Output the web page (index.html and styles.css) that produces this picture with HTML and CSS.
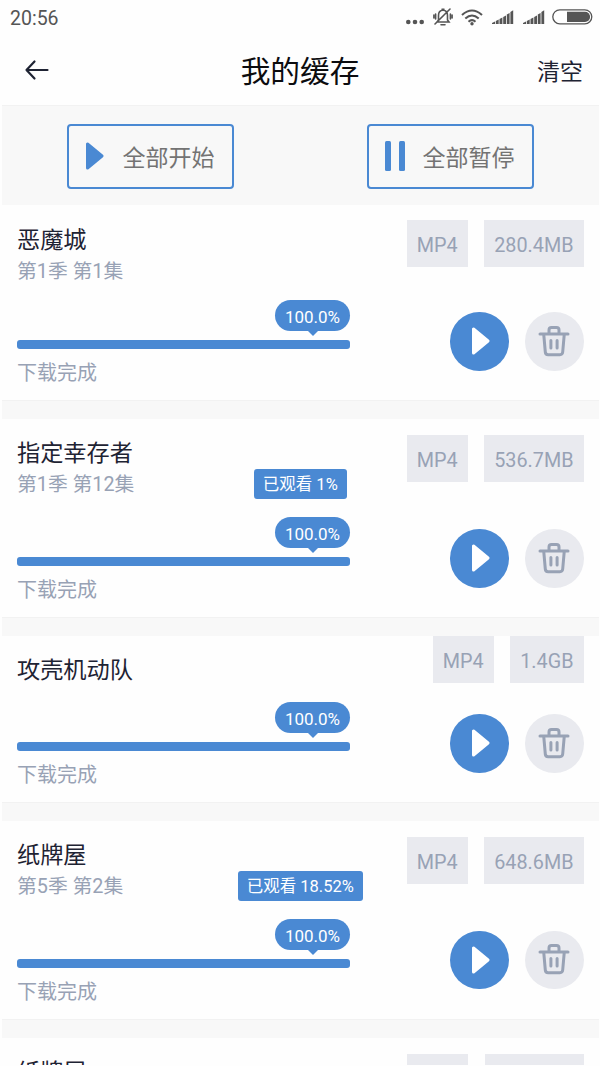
FILE: index.html
```html
<!DOCTYPE html>
<html lang="zh-CN">
<head>
<meta charset="utf-8">
<title>我的缓存</title>
<link rel="stylesheet" href="styles.css">
</head>
<body>
<svg class="defs" width="0" height="0">
  <symbol id="play" viewBox="0 0 20 28"><path d="M2.500 2v24L17 14z" fill="currentColor" stroke="currentColor" stroke-width="3" stroke-linejoin="round"/></symbol>
  <symbol id="trash" viewBox="0 0 32 32"><g fill="none" stroke="currentColor" stroke-width="3" stroke-linecap="round" stroke-linejoin="round"><path d="M2 9h28M11 8.500V5q0-2.500 2.500-2.500h5Q21 2.500 21 5v3.500M5.800 10l1.500 17q.2 2.700 2.800 2.700h11.800q2.600 0 2.800-2.700L26.200 10"/><path d="M12.900 15.500v7.500M19.100 15.500v7.500"/></g></symbol>
  <symbol id="signal" viewBox="0 0 22 16"><path fill="currentColor" d="M0 15v-1l3-1.500V15zM3.800 15v-3l2.900-1.400V15zM7.500 15v-5l2.900-1.400V15zM11.200 15V8l2.800-1.500V15zM14.800 15V5.500l2.800-1.500V15zM18.400 15V3l2.800-1.800V15z"/></symbol>
</svg>
<header class="header">
  <div class="status">
    <span class="clock">20:56</span>
    <div class="indicators">
      <svg class="dots" width="18" height="18" viewBox="0 0 18 18"><g fill="currentColor"><circle cx="2.300" cy="14" r="2.300"/><circle cx="9" cy="14" r="2.300"/><circle cx="15.700" cy="14" r="2.300"/></g></svg>
      <svg class="bell" width="20" height="18" viewBox="0 0 20 18"><g fill="none" stroke="currentColor" stroke-width="1.600" stroke-linecap="round"><path d="M4 14h12l-1.500-2V7.500Q14.500 2.200 10 2.200T5.500 7.500V12zM9 1.200h2M8 16.700h4M17 1L2 16M2.600 6v5M.9 7v3M17.400 6v5M19.100 7v3"/></g></svg>
      <svg class="wifi" width="22" height="18" viewBox="0 0 22 18"><g fill="none" stroke="currentColor" stroke-width="2.100"><path d="M1 7q10-9 20 0M4.300 10.500q6.700-6 13.400 0M7.500 13.700q3.500-3 7 0"/></g><circle cx="11" cy="15.800" r="1.700" fill="currentColor"/></svg>
      <svg class="signal" width="22" height="16"><use href="#signal"/></svg>
      <svg class="signal" width="22" height="16"><use href="#signal"/></svg>
      <svg class="battery" width="41" height="16" viewBox="0 0 41 16"><rect x=".8" y=".8" width="39" height="14" rx="7" fill="none" stroke="currentColor" stroke-width="1.300"/><path d="M15 2.700h18a5.100 5.100 0 0 1 0 10.200H15z" fill="currentColor"/></svg>
    </div>
  </div>
  <nav class="nav">
    <svg class="back" width="26" height="22" viewBox="0 0 26 22"><path d="M23.500 11H2.500M10.500 2.500L2.500 11l8 8.500" fill="none" stroke="currentColor" stroke-width="2.200" stroke-linecap="round" stroke-linejoin="round"/></svg>
    <h1 class="heading">我的缓存</h1>
    <span class="clear">清空</span>
  </nav>
</header>
<main>
  <div class="toolbar">
    <div class="bulk"><svg class="bulk-icon" width="20" height="28"><use href="#play"/></svg><span class="bulk-text">全部开始</span></div>
    <div class="bulk"><svg class="bulk-icon" width="20" height="30" viewBox="0 0 20 30"><g fill="currentColor"><rect width="6" height="30" rx="1.500"/><rect x="14" width="6" height="30" rx="1.500"/></g></svg><span class="bulk-text">全部暂停</span></div>
  </div>
  <article class="card first">
    <div class="head">
      <div class="names"><h2 class="title">恶魔城</h2><p class="episode">第1季 第1集</p></div>
      <div></div>
      <div class="tags"><span class="tag">MP4</span><span class="tag">280.4MB</span></div>
    </div>
    <div class="body">
      <div class="progress"><span class="bubble">100.0%</span><div class="bar"></div><p class="state">下载完成</p></div>
      <div class="actions"><span class="round play"><svg width="20" height="28"><use href="#play"/></svg></span><span class="round trash"><svg width="32" height="32"><use href="#trash"/></svg></span></div>
    </div>
  </article>
  <article class="card">
    <div class="head">
      <div class="names"><h2 class="title">指定幸存者</h2><p class="episode">第1季 第12集</p></div>
      <span class="watched">已观看 1%</span>
      <div class="tags"><span class="tag">MP4</span><span class="tag">536.7MB</span></div>
    </div>
    <div class="body">
      <div class="progress"><span class="bubble">100.0%</span><div class="bar"></div><p class="state">下载完成</p></div>
      <div class="actions"><span class="round play"><svg width="20" height="28"><use href="#play"/></svg></span><span class="round trash"><svg width="32" height="32"><use href="#trash"/></svg></span></div>
    </div>
  </article>
  <article class="card movie">
    <div class="head">
      <div class="names"><h2 class="title">攻壳机动队</h2></div>
      <div></div>
      <div class="tags"><span class="tag">MP4</span><span class="tag">1.4GB</span></div>
    </div>
    <div class="body">
      <div class="progress"><span class="bubble">100.0%</span><div class="bar"></div><p class="state">下载完成</p></div>
      <div class="actions"><span class="round play"><svg width="20" height="28"><use href="#play"/></svg></span><span class="round trash"><svg width="32" height="32"><use href="#trash"/></svg></span></div>
    </div>
  </article>
  <article class="card">
    <div class="head">
      <div class="names"><h2 class="title">纸牌屋</h2><p class="episode">第5季 第2集</p></div>
      <span class="watched">已观看 18.52%</span>
      <div class="tags"><span class="tag">MP4</span><span class="tag">648.6MB</span></div>
    </div>
    <div class="body">
      <div class="progress"><span class="bubble">100.0%</span><div class="bar"></div><p class="state">下载完成</p></div>
      <div class="actions"><span class="round play"><svg width="20" height="28"><use href="#play"/></svg></span><span class="round trash"><svg width="32" height="32"><use href="#trash"/></svg></span></div>
    </div>
  </article>
  <article class="card partial">
    <div class="head">
      <div class="names"><h2 class="title">纸牌屋</h2></div>
      <div></div>
      <div class="tags"><span class="tag"></span><span class="tag wide"></span></div>
    </div>
  </article>
</main>
</body>
</html>
```
FILE: styles.css
```css
* { box-sizing: border-box; margin: 0; }
html { overflow: hidden; }
body {
  height: 1066px;
  overflow: hidden;
  background: #fefefe;
  font-family: Roboto, "Noto Sans CJK SC", sans-serif;
  color: #1e2333;
}
svg { display: block; flex: none; }
h1, h2 { font-weight: 400; }
.defs { position: absolute; }

.header { height: 105px; }
.status {
  height: 35px;
  padding: 0 7px 0 10px;
  display: flex;
  align-items: center;
  justify-content: space-between;
  color: #555;
}
.clock { font-size: 19.5px; line-height: 35px; padding-top: 1px; }
.indicators { display: flex; align-items: center; padding-bottom: 2px; }
.bell { margin-left: 9px; }
.wifi { margin-left: 8px; }
.signal { margin-left: 9px; }
.wifi + .signal { margin-left: 9.5px; }
.battery { margin-left: 7px; }

.nav {
  height: 70px;
  padding: 0 17px 0 24px;
  display: grid;
  grid-template-columns: 1fr auto 1fr;
  align-items: center;
}
.heading { font-size: 29.7px; line-height: 40px; color: #0c0c0f; margin-right: 7px; padding-top: 4px; }
.clear { justify-self: end; font-size: 23px; line-height: 32px; padding-top: 5px; }

main { margin: 0 1px 0 2px; }
.toolbar {
  height: 100px;
  padding: 18px 65px 0;
  display: flex;
  justify-content: space-between;
  background: #f8f8f8;
  border-top: 1px solid #f2f2f2;
}
.bulk {
  width: 167px;
  height: 65px;
  padding-left: 16px;
  display: flex;
  align-items: center;
  border: 2px solid #4a89d3;
  border-radius: 4px;
  font-size: 23px;
  color: #737373;
}
.bulk-icon { color: #4a89d3; margin-right: 17.5px; margin-bottom: 2px; }
.bulk-text { padding-bottom: 2px; }

.card {
  padding: 0 15.5px 0 15px;
  border-bottom: 1px solid #f2f2f2;
  box-shadow: 0 18px 0 #f8f8f8;
  margin-bottom: 18px;
}
.head {
  height: 98px;
  padding-top: 16px;
  display: grid;
  grid-template-columns: 1fr auto 1fr;
  align-items: start;
}
.first .head { height: 95px; padding-top: 15px; }
.movie .head { height: 66px; padding-top: 0; }
.names { padding-top: 2px; }
.first .names { padding-top: 4px; }
.movie .names { padding-top: 18px; }
.title { font-size: 23.2px; line-height: 32px; }
.episode { font-size: 19.8px; line-height: 31px; color: #98a2b5; white-space: nowrap; }
.watched {
  margin-top: 34px;
  height: 30px;
  padding: 0 9px;
  border-radius: 3px;
  background: #4a89d3;
  color: #fff;
  font-size: 16.5px;
  line-height: 32px;
  white-space: nowrap;
}
.tags { display: flex; justify-content: flex-end; gap: 16.5px; }
.tag {
  height: 47px;
  min-width: 61px;
  padding: 0 10px;
  background: #e9eaef;
  color: #98a2b5;
  font-size: 19.8px;
  line-height: 51px;
}
.tag.wide { min-width: 99px; }
.partial { height: 27px; margin-bottom: 0; border: 0; box-shadow: none; overflow: hidden; }

.body { height: 100px; display: flex; justify-content: space-between; }
.movie .body { height: 99.5px; }
.progress { width: 333px; display: flex; flex-direction: column; }
.bubble {
  position: relative;
  align-self: flex-end;
  width: 75px;
  height: 31px;
  border-radius: 16px;
  background: #4a89d3;
  color: #fff;
  font-size: 17px;
  line-height: 34px;
  text-align: center;
}
.bubble::after {
  content: "";
  position: absolute;
  top: 100%;
  left: 33px;
  border: 5px solid transparent;
  border-top-color: #4a89d3;
  border-bottom: 0;
}
.bar { height: 9px; margin-top: 9px; border-radius: 3px; background: #4a89d3; }
.state { margin-top: 9px; font-size: 20px; line-height: 30px; color: #98a2b5; }
.actions { display: flex; gap: 16.5px; padding-top: 12px; }
.round {
  width: 58.5px;
  height: 58.5px;
  border-radius: 50%;
  display: flex;
  align-items: center;
  justify-content: center;
}
.play { background: #4a89d3; color: #fff; padding-left: 4px; }
.trash { background: #e9eaef; color: #98a2b5; padding-bottom: 1px; }
```
